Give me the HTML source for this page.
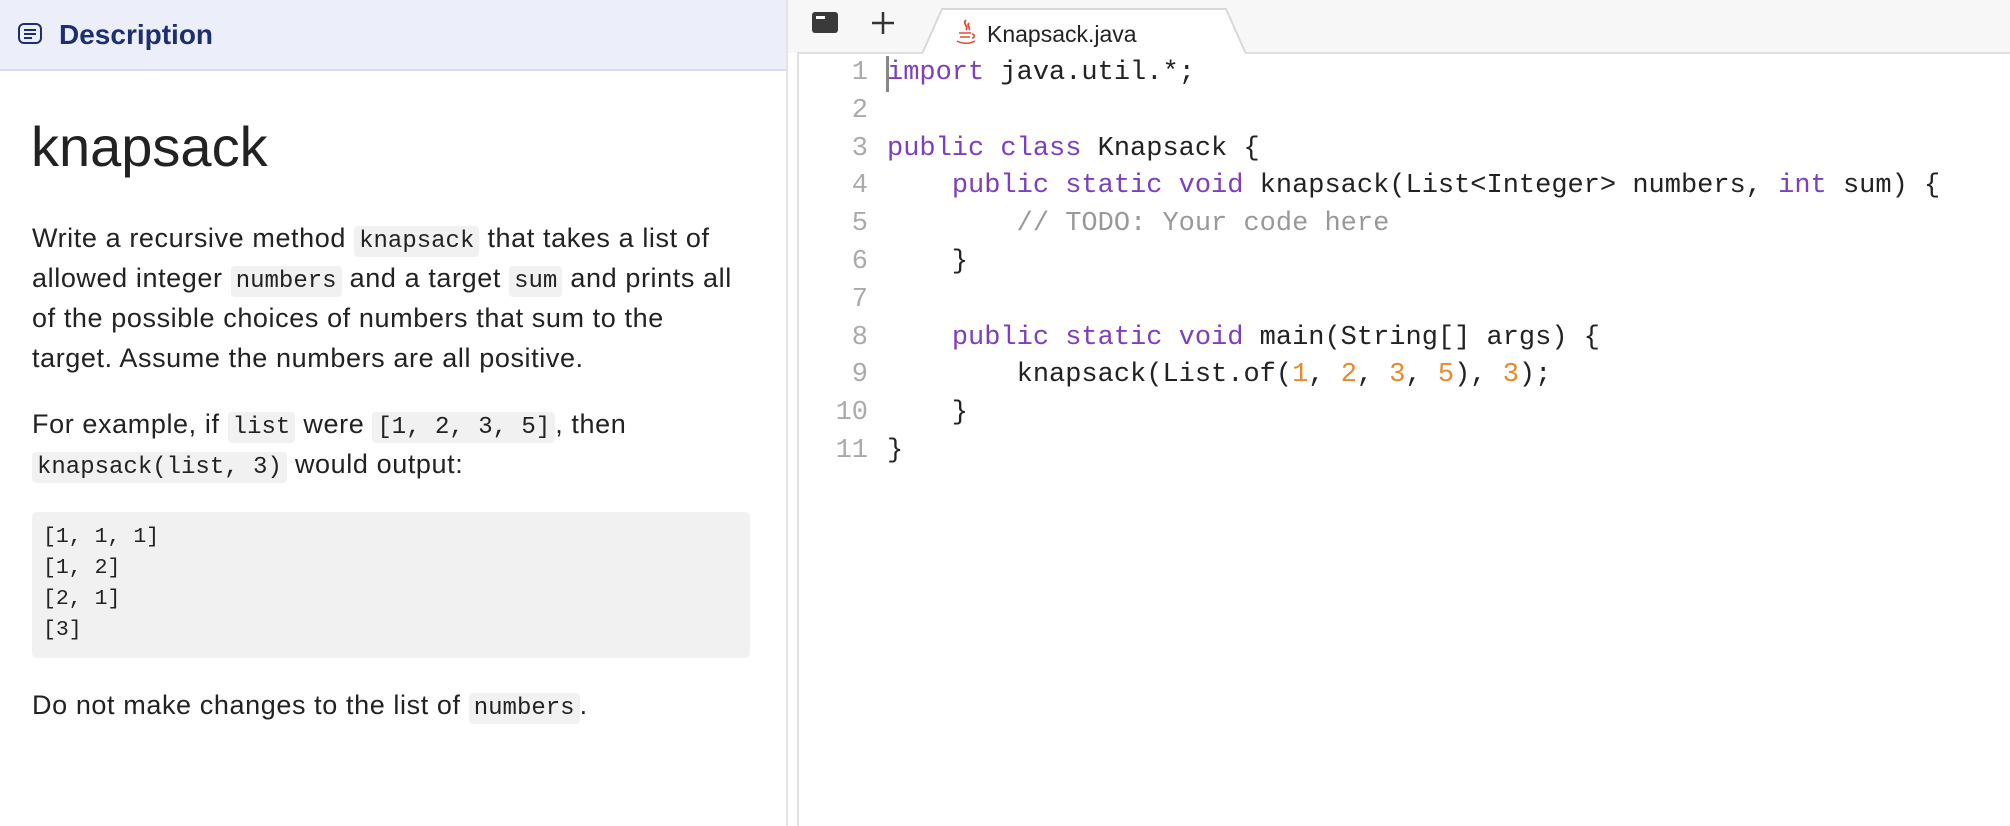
<!DOCTYPE html>
<html><head><meta charset="utf-8"><style>
*{margin:0;padding:0;box-sizing:border-box}
body{width:2010px;height:826px;overflow:hidden;background:#fff;position:relative;font-family:"Liberation Sans",sans-serif;color:#222}
.abs{position:absolute;white-space:nowrap}
#hdr{left:0;top:0;width:786px;height:71px;background:#eceff9;border-bottom:2px solid #d6dcef}
#div{left:786px;top:0;width:2px;height:826px;background:#e4e4e4}
.t{font-size:27px;line-height:40px;left:32px;color:#222;letter-spacing:0.6px}
code,.c{font-family:"Liberation Mono",monospace;font-size:24px;letter-spacing:0;background:#f1f1f1;border-radius:4px;padding:2px 5px}
#pre{left:32px;top:512px;width:718px;height:146px;background:#f1f1f1;border-radius:5px;font-family:"Liberation Mono",monospace;font-size:21.5px;color:#222;padding:10px 11px;line-height:31px}
#tabbar{left:788px;top:0;width:1222px;height:53px;background:#f7f7f7}
#ed{left:797px;top:52px;width:1213px;height:774px;background:#fff;border-left:2px solid #e0e0e0;border-top:2px solid #e0e0e0}
.ln{font-family:"Liberation Mono",monospace;font-size:27px;line-height:37.8px;color:#aaa;text-align:right;width:70px;left:798px}
.cd{font-family:"Liberation Mono",monospace;font-size:27px;line-height:37.8px;color:#222;left:887px;white-space:pre}
.k{color:#7b3fbf}.n{color:#e8892c}.cm{color:#999}
</style></head><body>
<div id="hdr" class="abs"></div>
<svg class="abs" style="left:17px;top:22px" width="26" height="24" viewBox="0 0 26 24"><rect x="2" y="2" width="22" height="19" rx="5" fill="none" stroke="#1e2f6e" stroke-width="2"/><path d="M7 8h12M7 12h12M7 16h8" stroke="#1e2f6e" stroke-width="2"/></svg>
<div class="abs" style="left:59px;top:16px;font-size:28px;color:#1e2f6e;font-weight:bold;line-height:38px">Description</div>
<div id="div" class="abs"></div>
<div class="abs" style="left:31px;top:112px;font-size:56px;line-height:70px;color:#222">knapsack</div>
<div class="abs t" style="top:218px">Write a recursive method <code>knapsack</code> that takes a list of</div>
<div class="abs t" style="top:258px">allowed integer <code>numbers</code> and a target <code>sum</code> and prints all</div>
<div class="abs t" style="top:298px">of the possible choices of numbers that sum to the</div>
<div class="abs t" style="top:338px">target. Assume the numbers are all positive.</div>
<div class="abs t" style="top:404px">For example, if <code>list</code> were <code>[1, 2, 3, 5]</code>, then</div>
<div class="abs t" style="top:444px"><code>knapsack(list, 3)</code> would output:</div>
<div id="pre" class="abs">[1, 1, 1]<br>[1, 2]<br>[2, 1]<br>[3]</div>
<div class="abs t" style="top:685px">Do not make changes to the list of <code>numbers</code>.</div>

<div id="tabbar" class="abs"></div>
<div id="ed" class="abs"></div>
<svg class="abs" style="left:810px;top:10px" width="30" height="26"><rect x="2" y="2" width="26" height="21" rx="3" fill="#3a3a3a"/><rect x="6" y="6" width="9" height="3" fill="#fff"/></svg>
<svg class="abs" style="left:870px;top:10px" width="26" height="26"><path d="M13 2v22M2 13h22" stroke="#333" stroke-width="2.5"/></svg>
<svg class="abs" style="left:920px;top:8px" width="330" height="48"><path d="M2 46 L22 1 L306 1 L326 46" fill="#fff" stroke="#d8d8d8" stroke-width="2"/><rect x="3" y="44" width="322" height="6" fill="#fff"/></svg>
<svg class="abs" style="left:954px;top:18px" width="24" height="28" viewBox="0 0 24 28"><path d="M12 2c-4 4 3 6 0 10M15 5c-3 3 2 4 0 7" stroke="#e34a32" stroke-width="1.8" fill="none"/><path d="M5 15h12M6 19h10M3 23c5 3 13 3 18 0M18 16c3 0 3 4 0 4" stroke="#e34a32" stroke-width="1.6" fill="none"/></svg>
<div class="abs" style="left:987px;top:18px;font-size:23px;line-height:32px;color:#222">Knapsack.java</div>

<div class="abs" style="left:886px;top:56px;width:3px;height:36px;background:#888"></div>
<div class="abs ln" style="top:55px">1<br>2<br>3<br>4<br>5<br>6<br>7<br>8<br>9<br>10<br>11</div>
<div class="abs cd" style="top:55px"><span class="k">import</span> java.util.*;

<span class="k">public class</span> Knapsack {
    <span class="k">public static void</span> knapsack(List&lt;Integer&gt; numbers, <span class="k">int</span> sum) {
        <span class="cm">// TODO: Your code here</span>
    }

    <span class="k">public static void</span> main(String[] args) {
        knapsack(List.of(<span class="n">1</span>, <span class="n">2</span>, <span class="n">3</span>, <span class="n">5</span>), <span class="n">3</span>);
    }
}</div>
</body></html>
